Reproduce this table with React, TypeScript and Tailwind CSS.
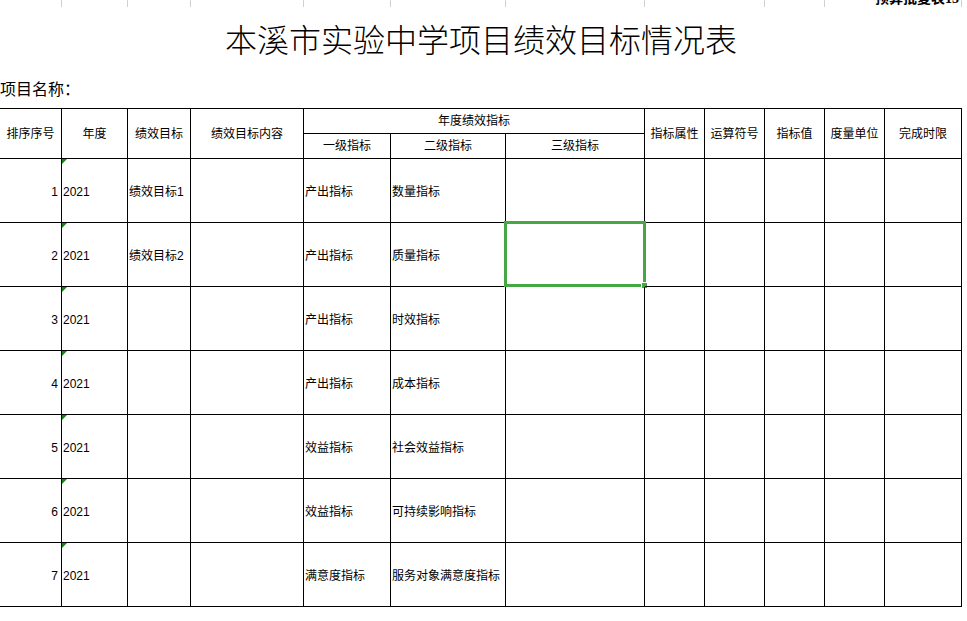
const cols = 'grid-cols-[62px_66px_63px_113px_87px_115px_139px_60px_60px_60px_60px_77px]';

const rows = [
    { no: 1, goal: '绩效目标1', l1: '产出指标', l2: '数量指标' },
    { no: 2, goal: '绩效目标2', l1: '产出指标', l2: '质量指标' },
    { no: 3, goal: '', l1: '产出指标', l2: '时效指标' },
    { no: 4, goal: '', l1: '产出指标', l2: '成本指标' },
    { no: 5, goal: '', l1: '效益指标', l2: '社会效益指标' },
    { no: 6, goal: '', l1: '效益指标', l2: '可持续影响指标' },
    { no: 7, goal: '', l1: '满意度指标', l2: '服务对象满意度指标' },
];

const Head = ({ text, span }: { text: string; span: string }) => (
    <div className={`${span} border-r border-b border-black flex items-center justify-center`}>{text}</div>
);

const Cell = ({ children, extra = '' }: { children?: React.ReactNode; extra?: string }) => (
    <div className={`relative border-r border-b border-black flex items-center pt-[2px] whitespace-nowrap ${extra}`}>{children}</div>
);

export default function App() {
    return (
        <div
            className="w-[967px] h-[621px] bg-white overflow-hidden text-black"
            style={{ fontFamily: '"Liberation Sans", "Noto Sans CJK SC", sans-serif' }}
        >
            {/* cut-off row above */}
            <div className="relative h-[7px] w-[962px] flex overflow-hidden">
                <div className="w-[62px] border-r border-[#d0d0d0]" />
                <div className="w-[66px] border-r border-[#d0d0d0]" />
                <div className="w-[63px] border-r border-[#d0d0d0]" />
                <div className="w-[113px] border-r border-[#d0d0d0]" />
                <div className="w-[87px] border-r border-[#d0d0d0]" />
                <div className="w-[115px] border-r border-[#d0d0d0]" />
                <div className="w-[139px] border-r border-[#d0d0d0]" />
                <div className="w-[120px] border-r border-[#d0d0d0]" />
                <div className="w-[60px] border-r border-[#d0d0d0]" />
                <div className="w-[137px] border-r border-[#d0d0d0]" />
                <div
                    className="absolute right-[3px] top-[-9px] bg-white text-[14px] font-bold leading-[16px] pl-[2px]"
                    style={{ fontFamily: '"Liberation Serif", "Noto Sans CJK SC", serif' }}
                >
                    预算批复表13
                </div>
            </div>

            <div className="h-[68px] w-[962px] flex items-center justify-center">
                <div className="text-[32px] font-light leading-none">本溪市实验中学项目绩效目标情况表</div>
            </div>

            <div className="h-[33px] flex items-center pb-[3px] text-[16px] leading-none">项目名称：</div>

            <div className={`grid ${cols} grid-rows-[25px_25px_repeat(7,64px)] w-[962px] border-t border-black text-[12px] leading-none`}>
                <Head text="排序序号" span="row-span-2" />
                <Head text="年度" span="row-span-2" />
                <Head text="绩效目标" span="row-span-2" />
                <Head text="绩效目标内容" span="row-span-2" />
                <Head text="年度绩效指标" span="col-span-3" />
                <Head text="指标属性" span="row-span-2" />
                <Head text="运算符号" span="row-span-2" />
                <Head text="指标值" span="row-span-2" />
                <Head text="度量单位" span="row-span-2" />
                <Head text="完成时限" span="row-span-2" />
                <Head text="一级指标" span="" />
                <Head text="二级指标" span="" />
                <Head text="三级指标" span="" />

                {rows.map((r) => (
                    <div key={r.no} className="contents">
                        <Cell extra="justify-end pr-[3px]">{r.no}</Cell>
                        <Cell extra="pl-[1px]">
                            <svg className="absolute left-0 top-0" width="5" height="5" viewBox="0 0 5 5">
                                <polygon points="0,0 5,0 0,5" fill="#10861a" />
                            </svg>
                            2021
                        </Cell>
                        <Cell extra="pl-[1px]">{r.goal}</Cell>
                        <Cell />
                        <Cell extra="pl-[1px]">{r.l1}</Cell>
                        <Cell extra="pl-[1px]">{r.l2}</Cell>
                        <Cell>
                            {r.no === 2 && (
                                <div className="absolute -left-[2px] -top-[2px] -right-[2px] -bottom-[1px] border-[3px] border-[#45a845]">
                                    <div className="absolute -right-[5px] -bottom-[5px] w-[7px] h-[7px] bg-[#45a845] border border-white" />
                                </div>
                            )}
                        </Cell>
                        <Cell />
                        <Cell />
                        <Cell />
                        <Cell />
                        <Cell />
                    </div>
                ))}
            </div>
        </div>
    );
}
